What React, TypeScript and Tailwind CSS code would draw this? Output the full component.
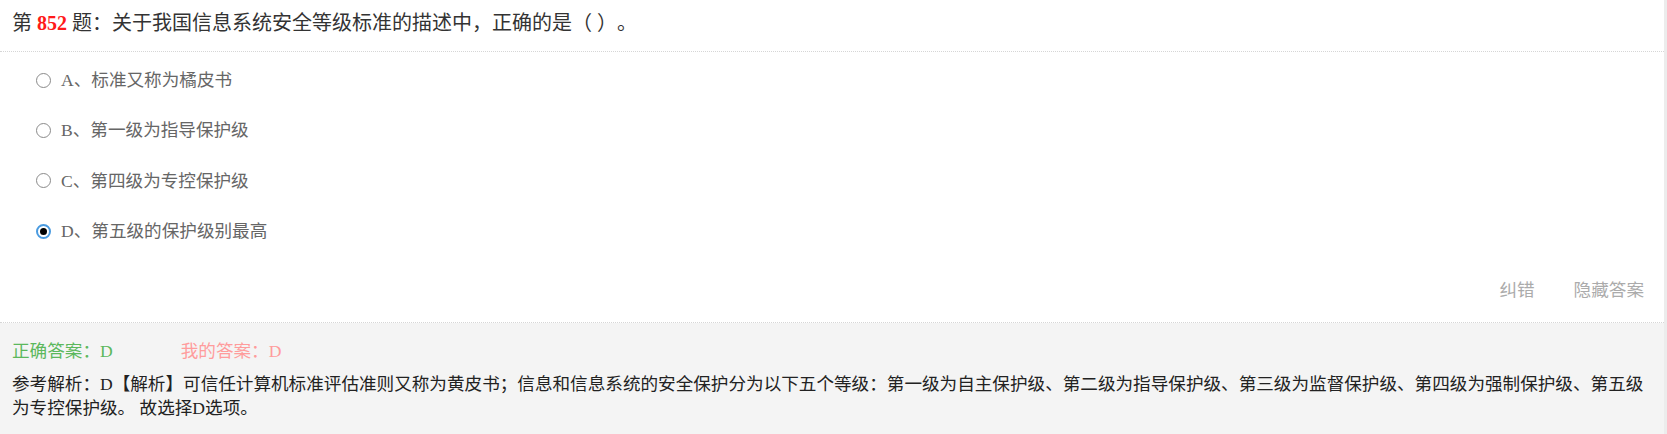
import React from 'react'

const options = [
  { key: 'A', text: '标准又称为橘皮书', checked: false },
  { key: 'B', text: '第一级为指导保护级', checked: false },
  { key: 'C', text: '第四级为专控保护级', checked: false },
  { key: 'D', text: '第五级的保护级别最高', checked: true },
]

const Radio = ({ checked }: { checked: boolean }) =>
  checked ? (
    <span className="flex w-[15px] h-[15px] items-center justify-center rounded-full border-2 border-[#4a9be0] bg-white">
      <span className="w-[7px] h-[7px] rounded-full bg-black" />
    </span>
  ) : (
    <span className="block w-[15px] h-[15px] rounded-full border border-[#8a8a8a] bg-white" />
  )

export default function App() {
  return (
    <div className="flex w-[1667px] bg-[#ececec] font-['Liberation_Serif','Noto_Sans_CJK_SC',serif] [text-spacing-trim:space-all]">
      <div className="w-[1664px] bg-white">
        <div className="h-[52px] pt-[9px] px-[12px] border-b border-dotted border-[#d6d6d6] text-[20px] leading-[28px] text-[#333]">
          第 <span className="font-bold text-[#ff1a1a]">852</span> 题：关于我国信息系统安全等级标准的描述中，正确的是（ ）。
        </div>

        <div className="pt-[3px] pl-[36px]">
          {options.map((o) => (
            <div key={o.key} className="flex items-center h-[50.4px] gap-[10px] text-[17.6px] text-[#666]">
              <Radio checked={o.checked} />
              <span>
                {o.key}、{o.text}
              </span>
            </div>
          ))}
        </div>

        <div className="flex justify-end items-start gap-[39px] h-[66px] pt-[21px] pr-[20px] border-b border-dotted border-[#d6d6d6] text-[17.6px] leading-[24px] text-[#ababab]">
          <span>纠错</span>
          <span>隐藏答案</span>
        </div>

        <div className="bg-[#f4f4f4] h-[112px] pt-[16px] px-[12px] text-[17.6px] leading-[24px]">
          <div className="flex gap-[68px]">
            <span className="text-[#5cb85c]">正确答案：D</span>
            <span className="text-[#ff9c9c]">我的答案：D</span>
          </div>
          <p className="mt-[9px] text-[#222]">
            参考解析：D【解析】可信任计算机标准评估准则又称为黄皮书；信息和信息系统的安全保护分为以下五个等级：第一级为自主保护级、第二级为指导保护级、第三级为监督保护级、第四级为强制保护级、第五级为专控保护级。 故选择D选项。
          </p>
        </div>
      </div>
    </div>
  )
}
